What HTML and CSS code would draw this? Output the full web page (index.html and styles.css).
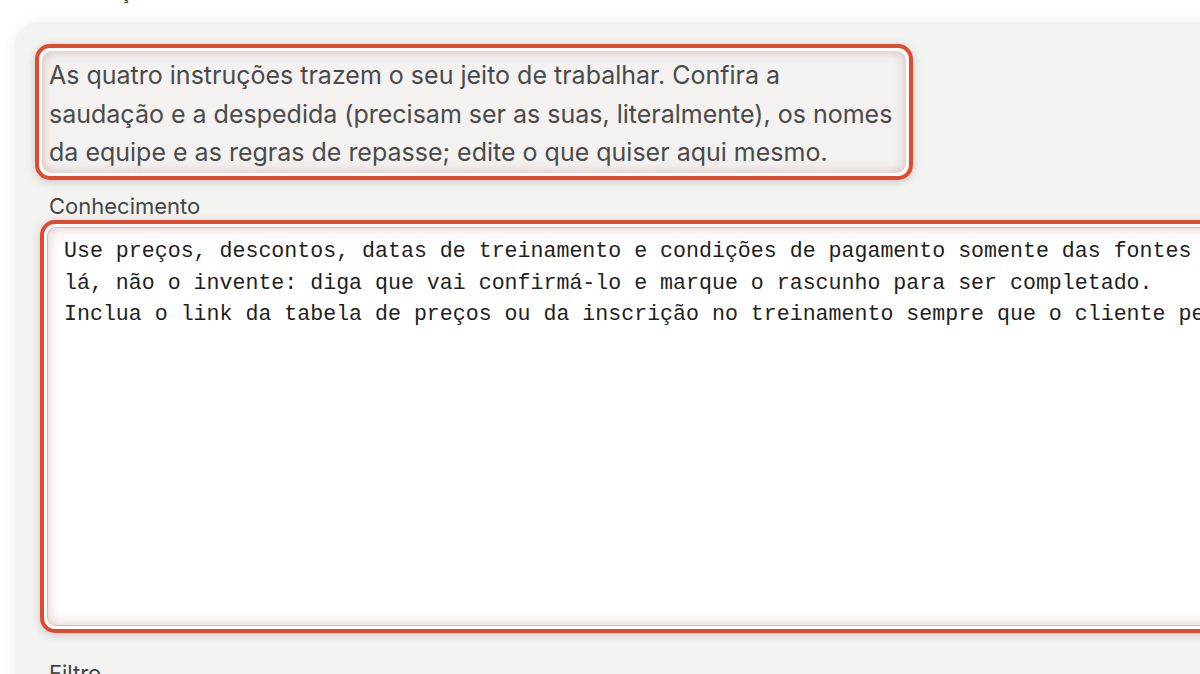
FILE: index.html
```html
<!DOCTYPE html>
<html lang="pt">
<head>
<meta charset="utf-8">
<link rel="stylesheet" href="styles.css">
</head>
<body>
<div class="top-label"><span>Instruções</span></div>
<section class="card">
  <div class="mark mark-desc">
    <p class="desc">As quatro instruções trazem o seu jeito de trabalhar. Confira a<br>saudação e a despedida (precisam ser as suas, literalmente), os nomes<br>da equipe e as regras de repasse; edite o que quiser aqui mesmo.</p>
  </div>
  <div class="field-label">Conhecimento</div>
  <div class="mark mark-area">
    <div class="area">Use preços, descontos, datas de treinamento e condições de pagamento somente das fontes anexadas. Se um dado não estiver
lá, não o invente: diga que vai confirmá-lo e marque o rascunho para ser completado.
Inclua o link da tabela de preços ou da inscrição no treinamento sempre que o cliente pedir.</div>
  </div>
  <div class="field-label filter-label">Filtro</div>
</section>
</body>
</html>
```

FILE: styles.css
```css
html, body {
  margin: 0;
  padding: 0;
  background: #ffffff;
}
body {
  width: 1200px;
  height: 674px;
  overflow: hidden;
  font-family: Inter, "Noto Sans", sans-serif;
  color: #4a4a4a;
}
.top-label {
  height: 22px;
  overflow: hidden;
  padding-left: 60px;
}
.top-label span {
  display: block;
  font-size: 22px;
  line-height: 22px;
  margin-top: -20px;
  color: #444;
}
.card {
  margin-left: 15px;
  width: 1400px;
  height: 760px;
  background: #f3f3f1;
  border-radius: 24px;
  box-shadow: 0 0 14px rgba(0, 0, 0, 0.07);
  padding: 22px 0 0 20px;
  box-sizing: border-box;
}
.mark {
  border: 4px solid #e04a2e;
  border-radius: 15px;
  background: #ffffff;
  padding: 3px;
  box-shadow: 0 2px 10px rgba(0, 0, 0, 0.18);
  box-sizing: border-box;
}
.mark-desc {
  width: 878px;
  height: 136px;
}
.desc {
  margin: 0;
  height: 100%;
  box-sizing: border-box;
  background: #f3f2f0;
  border-radius: 10px;
  box-shadow: inset 0 0 12px rgba(150, 80, 70, 0.35);
  padding: 5px 2px 5px 7px;
  font-size: 25px;
  line-height: 38.5px;
  color: #4a4a4a;
  white-space: nowrap;
}
.field-label {
  margin: 12px 0 0 14px;
  font-size: 22px;
  line-height: 28px;
  color: #454545;
}
.mark-area {
  margin-left: 5px;
  width: 1300px;
  height: 413px;
}
.area {
  height: 100%;
  box-sizing: border-box;
  background: #ffffff;
  border: 1px solid #cdbcb7;
  border-radius: 9px;
  box-shadow: inset 0 0 14px rgba(150, 80, 70, 0.3);
  padding: 8px 16px 4px;
  font-family: "Liberation Mono", "DejaVu Sans Mono", monospace;
  font-size: 21.6px;
  line-height: 31.5px;
  color: #1e1e1e;
  white-space: pre;
  overflow: hidden;
}
.filter-label {
  margin-top: 26px;
}
```
